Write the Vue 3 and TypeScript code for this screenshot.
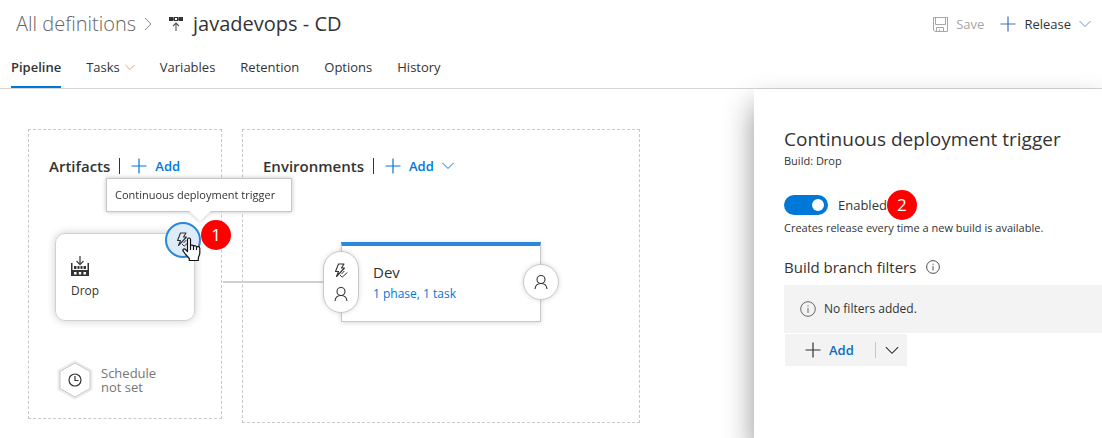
<script setup lang="ts">
import { ref } from 'vue'

const tabs: { label: string; menu?: boolean }[] = [
  { label: 'Pipeline' },
  { label: 'Tasks', menu: true },
  { label: 'Variables' },
  { label: 'Retention' },
  { label: 'Options' },
  { label: 'History' },
]
const activeTab = ref('Pipeline')
const enabled = ref(true)
</script>

<template>
  <div class="page">
    <svg class="sprite" aria-hidden="true">
      <symbol id="plus" viewBox="0 0 16 16">
        <path d="M8 0.5V15.5M0.5 8H15.5" fill="none" stroke="currentColor" stroke-width="1.2" />
      </symbol>
      <symbol id="chevron" viewBox="0 0 12 8">
        <path d="M0.5 1L6 6.5L11.5 1" fill="none" stroke="currentColor" stroke-width="1" />
      </symbol>
      <symbol id="person" viewBox="0 0 14 16">
        <circle cx="7" cy="5.5" r="4" fill="none" stroke="currentColor" stroke-width="1.1" />
        <path d="M1 15C1.3 11.5 3.5 9.5 7 9.5S12.7 11.5 13 15" fill="none" stroke="currentColor" stroke-width="1.1" />
      </symbol>
      <symbol id="bolt" viewBox="0 0 14 16">
        <path d="M4.5 1H10L7.5 5H10.5L2.5 13.5L4.5 8.5H1.5Z" fill="none" stroke="currentColor" stroke-width="1.1" stroke-linejoin="round" />
        <path d="M6 12L8.2 14.2L13.3 9.5M10.3 8L7.5 11" fill="none" stroke="currentColor" stroke-width="1" />
      </symbol>
      <symbol id="info" viewBox="0 0 16 16">
        <circle cx="8" cy="8" r="7.3" fill="none" stroke="currentColor" stroke-width="1" />
        <path d="M8 7V12M8 4.2V5.5" fill="none" stroke="currentColor" stroke-width="1" />
      </symbol>
    </svg>

    <header class="header">
      <div class="title-row">
        <a class="crumb" href="#">All definitions</a>
        <svg class="crumb-sep" width="8" height="14" viewBox="0 0 8 14"><path d="M1 1L7 7L1 13" fill="none" stroke="#8a8a8a" /></svg>
        <svg class="def-icon" width="16" height="16" viewBox="0 0 16 16">
          <path d="M1 1H5.500V5H1ZM10.500 1H15V5H10.500Z" fill="#333" />
          <rect x="6.5" y="1.5" width="3" height="3" fill="none" stroke="#333" />
          <path d="M5 3H6M10 3H11" stroke="#333" />
          <path d="M8 15V7M5 10L8 7L11 10" fill="none" stroke="#555" stroke-width="1.1" />
        </svg>
        <h1 class="title">javadevops - CD</h1>
        <div class="actions">
          <button class="action save" disabled>
            <svg width="15" height="15" viewBox="0 0 15 15" fill="none" stroke="currentColor">
              <path d="M0.5 0.5H14.5V14.5H2L0.5 13ZM2.5 0.5V7.5H12.5V0.5M3.5 14.5V10.5H10.5V14.5M6.5 14.5V12.5" />
            </svg>
            Save
          </button>
          <button class="action release">
            <svg class="blue" width="16" height="16"><use href="#plus" /></svg>
            Release
            <svg class="soft-blue" width="12" height="8"><use href="#chevron" /></svg>
          </button>
        </div>
      </div>
      <nav class="tabs">
        <button
          v-for="tab in tabs"
          :key="tab.label"
          class="tab"
          :class="{ active: tab.label === activeTab }"
          @click="activeTab = tab.label"
        >
          {{ tab.label }}
          <svg v-if="tab.menu" class="tab-chevron" width="10" height="7"><use href="#chevron" /></svg>
        </button>
      </nav>
    </header>

    <div class="body">
      <main class="canvas">
        <section class="group artifacts">
          <div class="group-head">
            <h2>Artifacts</h2>
            <button class="add"><svg width="16" height="16"><use href="#plus" /></svg>Add</button>
          </div>
          <div class="artifact">
            <svg width="18" height="20" viewBox="0 0 18 20">
              <path d="M9 0V8M5.500 5L9 8.500L12.500 5" fill="none" stroke="#444" stroke-width="1.3" />
              <path d="M0 7H1.500V19H0ZM16.500 7H18V19H16.500ZM0 14H18V20H0Z" fill="#333" />
              <path d="M3 10H5.500V13H3ZM6.500 10H8.500V13H6.500ZM9.500 10H11.500V13H9.500ZM12.500 10H15V13H12.500Z" fill="#333" />
              <path d="M3 16H5.500V18.500H3ZM7.800 16H10.200V18.500H7.800ZM12.500 16H15V18.500H12.500Z" fill="#fff" />
            </svg>
            <span>Drop</span>
            <button class="trigger" aria-label="Continuous deployment trigger" aria-describedby="trigger-tip">
              <svg width="14" height="16"><use href="#bolt" /></svg>
            </button>
            <div id="trigger-tip" class="tooltip" role="tooltip">Continuous deployment trigger</div>
            <span class="badge step-one">1</span>
            <svg class="pointer" width="19" height="25" viewBox="0 0 19 25">
              <path d="M5.5 2.5C5.5 0.5 8.5 0.5 8.5 2.5V9C8.5 7.8 11.5 7.8 11.5 9.5C12 8.3 14.5 8.5 14.5 10.2C15.2 9.2 17.8 9.4 17.8 11.2V16C17.8 18.5 16.3 19.5 16.3 21.5V23.5H7.3V21.5C6 20 2.5 16.5 1 13.8C0.5 12 2.2 11.3 3.5 12.5L5.5 14.5Z" fill="#fff" stroke="#111" stroke-width="1.2" stroke-linejoin="round" />
              <path d="M8.5 9V13M11.5 9.5V13M14.5 10.2V13" stroke="#111" stroke-width="1.2" />
            </svg>
          </div>
          <button class="schedule">
            <svg width="36" height="40" viewBox="0 0 36 40">
              <path d="M18 2L34 11V29L18 38L2 29V11Z" fill="#fff" stroke="#ececec" stroke-width="3" />
              <path d="M18 3L33 11.5V28.500L18 37L3 28.500V11.5Z" fill="#fff" stroke="#c8c8c8" />
              <circle cx="18" cy="20" r="6" fill="none" stroke="#333" stroke-width="1.2" />
              <path d="M18 16V20.500H21.500" fill="none" stroke="#333" stroke-width="1.2" />
            </svg>
            <span>Schedule<br />not set</span>
          </button>
        </section>

        <section class="group environments">
          <div class="group-head">
            <h2>Environments</h2>
            <button class="add">
              <svg width="16" height="16"><use href="#plus" /></svg>Add
              <svg width="12" height="8"><use href="#chevron" /></svg>
            </button>
          </div>
          <div class="stage">
            <span class="connector"></span>
            <button class="pre" aria-label="Pre-deployment conditions">
              <svg width="14" height="16"><use href="#bolt" /></svg>
              <svg width="14" height="16"><use href="#person" /></svg>
            </button>
            <h3>Dev</h3>
            <a href="#">1 phase, 1 task</a>
            <button class="post" aria-label="Post-deployment conditions">
              <svg width="14" height="16"><use href="#person" /></svg>
            </button>
          </div>
        </section>
      </main>

      <aside class="panel">
        <h2 class="panel-title">Continuous deployment trigger</h2>
        <p class="panel-sub">Build: Drop</p>
        <div class="toggle-row">
          <input id="cd-enabled" v-model="enabled" class="toggle" type="checkbox" role="switch" />
          <label for="cd-enabled">Enabled</label>
          <span class="badge">2</span>
        </div>
        <p class="hint">Creates release every time a new build is available.</p>
        <h3 class="filters-title">
          Build branch filters
          <svg width="14" height="14"><use href="#info" /></svg>
        </h3>
        <div class="empty">
          <svg width="16" height="16"><use href="#info" /></svg>
          No filters added.
        </div>
        <div class="split">
          <button class="split-add"><svg width="16" height="16"><use href="#plus" /></svg>Add</button>
          <button class="split-more" aria-label="More filter types">
            <svg width="14" height="9"><use href="#chevron" /></svg>
          </button>
        </div>
      </aside>
    </div>
  </div>
</template>

<style>
body {
  margin: 0;
  background: #fff;
}
</style>

<style scoped>
.page {
  display: flex;
  flex-direction: column;
  min-height: 100vh;
  overflow: hidden;
  color: #333;
  font-family: "Open Sans", "Noto Sans", sans-serif;
  font-size: 13px;
  line-height: 16px;
}
.page * {
  box-sizing: border-box;
}
.sprite {
  position: absolute;
  width: 0;
  height: 0;
}
svg {
  flex: none;
}
button {
  display: flex;
  align-items: center;
  padding: 0;
  border: 0;
  background: none;
  color: inherit;
  font: inherit;
}
a {
  color: inherit;
  text-decoration: none;
}
h1, h2, h3, p {
  margin: 0;
  font-weight: 400;
}

.header {
  border-bottom: 1px solid #d6d6d6;
}
.title-row {
  display: flex;
  align-items: center;
  height: 48px;
  padding: 0 11px 0 16px;
}
.crumb {
  color: #666;
  font-size: 20px;
  font-weight: 300;
}
.crumb-sep {
  margin: 0 16px 0 8px;
}
.def-icon {
  margin-right: 9px;
}
.title {
  font-size: 20px;
  line-height: 24px;
}
.actions {
  display: flex;
  gap: 16px;
  margin-left: auto;
}
.action {
  gap: 8px;
}
.save {
  color: #a6a6a6;
}
.blue {
  color: #4a6fc0;
}
.soft-blue {
  color: #6f95c0;
}
.tabs {
  display: flex;
  gap: 25px;
  padding-left: 11px;
}
.tab {
  gap: 5px;
  height: 40px;
  border-bottom: 2px solid transparent;
}
.tab.active {
  border-color: #0078d7;
  font-weight: 600;
}
.tab-chevron {
  color: #d39a5c;
}

.body {
  display: flex;
  flex: 1;
}
.canvas {
  display: flex;
  flex: 1;
  align-items: flex-start;
  gap: 20px;
  padding: 40px 28px 15px;
}
.group {
  border: 1px dashed #c8c8c8;
}
.artifacts {
  flex: 0 0 194px;
  padding: 25px 26px 18px;
}
.environments {
  flex: 0 0 398px;
  padding: 25px 98px 100px;
}
.group-head {
  display: flex;
  align-items: center;
  height: 22px;
}
.artifacts .group-head {
  margin-left: -6px;
}
.environments .group-head {
  margin-left: -78px;
}
.group-head h2 {
  padding-right: 9px;
  border-right: 1px solid #333;
  font-size: 15px;
  font-weight: 600;
}
.add {
  gap: 8px;
  margin-left: 11px;
  color: #0078d7;
  font-weight: 600;
}
.artifact {
  position: relative;
  display: flex;
  flex-direction: column;
  align-items: flex-start;
  gap: 7px;
  height: 88px;
  margin-top: 56px;
  padding: 22px 15px;
  border: 1px solid #d0d0d0;
  border-radius: 10px;
  box-shadow: 0 0 8px rgba(0, 0, 0, 0.2);
  font-size: 12px;
}
.trigger {
  position: absolute;
  top: -12px;
  right: -7px;
  justify-content: center;
  width: 36px;
  height: 36px;
  border: 2px solid #2b88d8;
  border-radius: 50%;
  background: #deecf9;
}
.tooltip {
  position: absolute;
  z-index: 2;
  bottom: 108px;
  left: 50px;
  padding: 8px 16px 8px 8px;
  border: 1px solid #c8c8c8;
  background: #fff;
  filter: drop-shadow(0 0 2px rgba(0, 0, 0, 0.25));
  font-size: 11px;
  white-space: nowrap;
}
.tooltip::after {
  position: absolute;
  bottom: -10px;
  left: 82px;
  width: 22px;
  height: 10px;
  background: #fff;
  clip-path: polygon(0 0, 100% 0, 50% 100%);
  content: "";
}
.badge {
  display: flex;
  align-items: center;
  justify-content: center;
  width: 30px;
  height: 30px;
  border-radius: 50%;
  background: #f00;
  color: #fff;
  font-size: 17px;
}
.step-one {
  position: absolute;
  top: -14px;
  left: 145px;
}
.pointer {
  position: absolute;
  top: 3px;
  left: 126px;
}
.schedule {
  gap: 8px;
  margin: 39px 0 0 2px;
  color: #767676;
  line-height: 14px;
  text-align: left;
}

.stage {
  position: relative;
  display: flex;
  flex-direction: column;
  align-items: flex-start;
  gap: 4px;
  height: 80px;
  margin-top: 65px;
  padding: 16px 31px;
  border: 1px solid #c8c8c8;
  border-top: 4px solid #2b88d8;
  box-shadow: 0 1px 5px rgba(0, 0, 0, 0.15);
}
.stage h3 {
  font-size: 15px;
  line-height: 20px;
}
.stage a {
  color: #0078d7;
  font-size: 12px;
}
.connector {
  position: absolute;
  top: 35px;
  right: 100%;
  width: 119px;
  height: 2px;
  background: #d0d0d0;
}
.pre, .post {
  position: absolute;
  justify-content: center;
  width: 36px;
  border: 1px solid #c8c8c8;
  border-radius: 18px;
  background: #fff;
  box-shadow: 0 0 5px rgba(0, 0, 0, 0.15);
}
.pre {
  top: 5px;
  left: -19px;
  flex-direction: column;
  gap: 7px;
  height: 62px;
}
.post {
  top: 18px;
  right: -19px;
  height: 36px;
}

.panel {
  position: relative;
  flex: 0 0 348px;
  padding: 36px 0 0 30px;
  background: #fff;
  box-shadow: 0 16px 28px rgba(0, 0, 0, 0.43);
}
.panel-title {
  font-size: 19px;
  line-height: 28px;
}
.panel-sub, .hint {
  font-size: 11px;
}
.toggle-row {
  display: flex;
  align-items: center;
  height: 30px;
  margin-top: 21px;
}
.toggle {
  display: flex;
  align-items: center;
  width: 44px;
  height: 20px;
  margin: 0 10px 0 0;
  padding: 0 4px;
  border-radius: 10px;
  background: #a6a6a6;
  appearance: none;
}
.toggle:checked {
  justify-content: flex-end;
  background: #0078d7;
}
.toggle::after {
  width: 12px;
  height: 12px;
  border-radius: 50%;
  background: #fff;
  content: "";
}
.hint {
  white-space: nowrap;
}
.filters-title {
  display: flex;
  align-items: center;
  gap: 10px;
  margin-top: 21px;
  font-size: 15px;
  line-height: 20px;
}
.empty {
  display: flex;
  align-items: center;
  gap: 8px;
  height: 48px;
  margin: 8px 0 1px;
  padding-left: 16px;
  background: #f3f3f3;
  font-size: 12px;
}
.empty svg {
  color: #666;
}
.split {
  display: flex;
  align-items: center;
  width: 122px;
  height: 32px;
  margin-left: 1px;
  background: #f3f3f3;
}
.split-add {
  flex: 1;
  gap: 8px;
  padding-left: 20px;
  color: #106ebe;
  font-weight: 600;
}
.split-add svg {
  color: #333;
}
.split-more {
  justify-content: center;
  width: 32px;
  height: 16px;
  border-left: 1px solid #c8c8c8;
}
</style>
